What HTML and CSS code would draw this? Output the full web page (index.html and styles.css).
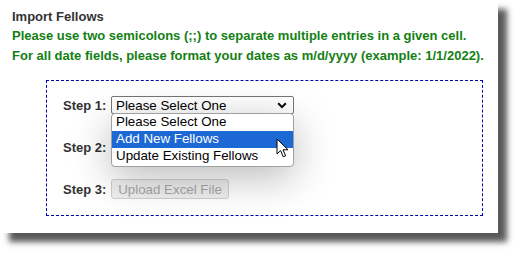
FILE: index.html
```html
<!DOCTYPE html>
<html lang="en">

<head>
    <meta charset="utf-8">
    <title>Import Fellows</title>
    <link rel="stylesheet" href="styles.css">
</head>

<body>
    <div class="panel">
        <h3 class="title">Import Fellows</h3>
        <p class="note">Please use two semicolons (;;) to separate multiple entries in a given cell.</p>
        <p class="note">For all date fields, please format your dates as m/d/yyyy (example: 1/1/2022).</p>

        <div class="steps">
            <div class="step">
                <span class="label">Step 1:</span>
                <div class="picker">
                    <div class="control">
                        <span>Please Select One</span>
                        <svg class="chevron" width="10" height="7" viewBox="0 0 10 7">
                            <path d="M1.2 1.3 L5 5.1 L8.8 1.3" fill="none" stroke="#000" stroke-width="2"/>
                        </svg>
                    </div>
                    <ul class="options">
                        <li>Please Select One</li>
                        <li class="hover">Add New Fellows</li>
                        <li>Update Existing Fellows</li>
                    </ul>
                    <svg class="cursor" width="14" height="21" viewBox="0 0 14 21">
                        <path d="M1 1 L1 16 L4.6 12.6 L7.2 18.8 L9.6 17.8 L7 11.8 L12 11.8 Z" fill="#fff" stroke="#000" stroke-width="1" stroke-linejoin="round"/>
                    </svg>
                </div>
            </div>
            <div class="step">
                <span class="label">Step 2:</span>
            </div>
            <div class="step">
                <span class="label">Step 3:</span>
                <button class="upload" disabled>Upload Excel File</button>
            </div>
        </div>
    </div>
</body>

</html>
```

FILE: styles.css
```css
html,
body {
    height: 100%;
}

body {
    margin: 0;
    min-height: 257px;
    background: #fff;
    font-family: "Liberation Sans", Arial, sans-serif;
}

.panel {
    width: 498px;
    height: 233px;
    box-sizing: border-box;
    padding: 7px 0 0 12px;
    background: #fff;
    box-shadow: 9px 9px 6px rgba(0, 0, 0, 0.65);
}

.title {
    margin: 0;
    font-size: 13px;
    line-height: 19px;
    font-weight: bold;
    color: #333;
}

.note {
    margin: 0;
    font-size: 13px;
    line-height: 19.5px;
    font-weight: bold;
    color: #138013;
}

.steps {
    width: 437px;
    box-sizing: border-box;
    margin: 15px 0 0 34px;
    padding: 14px 0 16px 16px;
    border: 1px dashed #0000a8;
    display: flex;
    flex-direction: column;
    gap: 22px;
}

.step {
    height: 20px;
    display: flex;
    align-items: center;
    gap: 4px;
}

.label {
    width: 44px;
    font-size: 13px;
    font-weight: bold;
    color: #333;
}

.picker {
    position: relative;
    width: 183px;
}

.control {
    height: 18px;
    box-sizing: border-box;
    border: 1px solid #767676;
    border-radius: 2px;
    padding: 0 0 0 4px;
    display: flex;
    align-items: center;
    justify-content: space-between;
    font-size: 13.33px;
    color: #000;
}

.chevron {
    margin-right: 6px;
}

.options {
    position: absolute;
    top: 17px;
    left: 0;
    width: 100%;
    box-sizing: border-box;
    margin: 0;
    padding: 0 0 1px;
    list-style: none;
    background: #fff;
    border: 1px solid #a0a0a0;
    border-radius: 4px;
    box-shadow: 0 10px 40px rgba(0, 0, 0, 0.28);
    font-size: 13.33px;
    color: #000;
}

.options li {
    height: 17px;
    line-height: 16px;
    padding-left: 4px;
}

.options .hover {
    background: #1c68d4;
    color: #fff;
}

.cursor {
    position: absolute;
    left: 165px;
    top: 42px;
}

.upload {
    width: 118px;
    height: 20px;
    padding: 0;
    border: 1px solid #cfcfcf;
    border-radius: 3px;
    background: #efefef;
    color: #a6a6a6;
    font-family: "Liberation Sans", Arial, sans-serif;
    font-size: 13.33px;
}
```
